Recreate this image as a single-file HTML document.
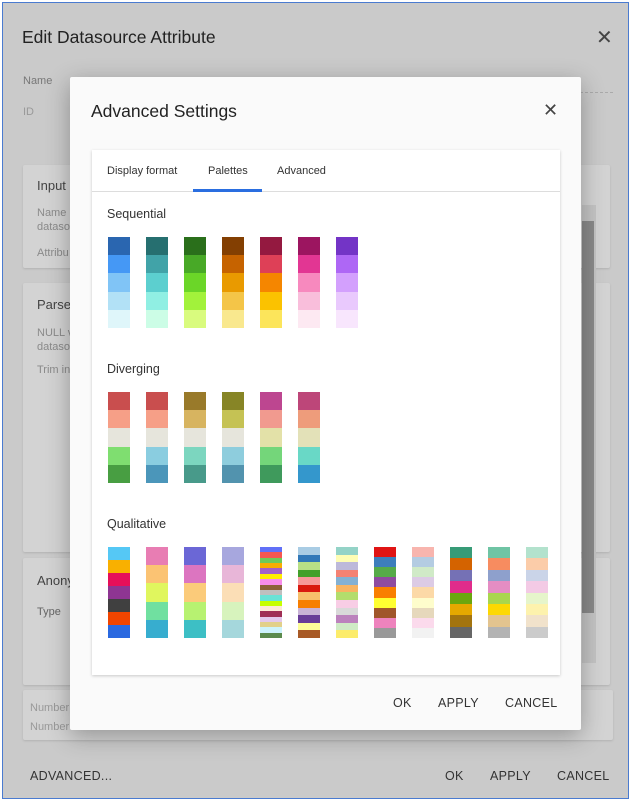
<!DOCTYPE html>
<html><head><style>
*{margin:0;padding:0;box-sizing:border-box}
body{width:633px;height:802px;background:#fff;font-family:"Liberation Sans",Arial,sans-serif;position:relative;overflow:hidden}
.frame{position:absolute;left:2px;top:2px;width:627px;height:797px;border:1px solid #4a7bd0;background:#cacaca}
.abs{position:absolute}
.card{position:absolute;background:#d3d3d3;border-radius:2px;box-shadow:0 1px 2px rgba(0,0,0,.12)}
.g{color:#8a8a8a;font-size:11px}
.modal{position:absolute;left:70px;top:77px;width:511px;height:653px;background:#fafafa;box-shadow:0 6px 24px rgba(0,0,0,.3);border-radius:2px}
.inner{position:absolute;left:22px;top:73px;width:468px;height:525px;background:#fff;box-shadow:0 1px 3px rgba(0,0,0,.2)}
.tab{position:absolute;top:15px;font-size:11px;color:#333}
.col{position:absolute;width:22px;display:flex;flex-direction:column}
.col div{flex:1}
.lbl{position:absolute;left:15px;font-size:12.5px;color:#333}
.btn{position:absolute;font-size:12.5px;color:#333;letter-spacing:.3px}
</style></head><body>
<div class="frame"></div>
<div class="abs" style="left:22px;top:27px;font-size:17.5px;color:#222">Edit Datasource Attribute</div>
<div class="abs" style="left:596px;top:25px;font-size:20px;color:#444">✕</div>
<div class="abs g" style="left:23px;top:75px;color:#777">Name</div>
<div class="abs g" style="left:23px;top:106px;color:#999">ID</div>
<div class="abs" style="left:405px;top:92px;width:208px;border-top:1px dashed #aaa"></div>
<div class="card" style="left:23px;top:165px;width:587px;height:103px"></div>
<div class="abs" style="left:37px;top:178px;font-size:13px;color:#444">Input</div>
<div class="abs g" style="left:37px;top:206px;line-height:14px">Name<br>dataso</div>
<div class="abs g" style="left:37px;top:247px">Attribu</div>
<div class="card" style="left:23px;top:283px;width:587px;height:269px"></div>
<div class="abs" style="left:37px;top:297px;font-size:13px;color:#444">Parse</div>
<div class="abs g" style="left:37px;top:326px;line-height:14px">NULL v<br>dataso</div>
<div class="abs g" style="left:37px;top:364px">Trim in</div>
<div class="card" style="left:23px;top:558px;width:587px;height:127px"></div>
<div class="abs" style="left:37px;top:573px;font-size:13px;color:#444">Anony</div>
<div class="abs g" style="left:37px;top:606px;color:#666">Type</div>
<div class="card" style="left:23px;top:690px;width:590px;height:50px"></div>
<div class="abs g" style="left:30px;top:699px;color:#999;line-height:19px">Number<br>Number</div>
<div class="abs" style="left:582px;top:205px;width:14px;height:458px;background:#c4c4c4"></div>
<div class="abs" style="left:582px;top:221px;width:12px;height:392px;background:#8a8a8a"></div>
<div class="btn" style="left:30px;top:769px">ADVANCED...</div>
<div class="btn" style="left:445px;top:769px">OK</div>
<div class="btn" style="left:490px;top:769px">APPLY</div>
<div class="btn" style="left:557px;top:769px">CANCEL</div>

<div class="modal">
<div class="abs" style="left:21px;top:24px;font-size:17.5px;color:#222">Advanced Settings</div>
<div class="abs" style="left:473px;top:23px;font-size:18px;color:#444">✕</div>
<div class="inner">
<div class="tab" style="left:15px">Display format</div>
<div class="tab" style="left:116px">Palettes</div>
<div class="tab" style="left:185px">Advanced</div>
<div class="abs" style="left:0;top:41px;width:468px;height:1px;background:#ddd"></div>
<div class="abs" style="left:101px;top:39px;width:69px;height:3px;background:#2a6ee0"></div>
<div class="lbl" style="top:57px">Sequential</div>
<div class="lbl" style="top:212px">Diverging</div>
<div class="lbl" style="top:367px">Qualitative</div>
<div id="p"></div>
</div>
<div class="btn" style="left:323px;top:619px">OK</div>
<div class="btn" style="left:368px;top:619px">APPLY</div>
<div class="btn" style="left:435px;top:619px">CANCEL</div>
</div>
<script>
var seq=[["2a66b0","4598f5","80c4f6","b2e1f6","dff6fa"],["266f70","41a3a8","5ccfcf","90efe3","ccfde6"],["2a6f1b","48a927","6bd628","a2f23b","d9fb7e"],["833f02","c66300","e99a00","f4c548","f9e88e"],["941940","de4057","f58600","fbc200","fce55b"],["9c1560","e23693","f789be","f9bedb","fde9f2"],["7334c6","ae67f5","d3a0fd","e9c9fd","f8e6fd"]];
var div=[["c94e4e","f69f87","e6e5dc","7fde70","489e42"],["c94e4e","f69f87","e6e5dc","8acde0","4b96ba"],["997a2a","d7b460","e6e5dc","7cd6bf","489a8a"],["878526","c5c254","e6e5dc","8ecddd","5293ae"],["bd4690","f19a8f","e3e1a8","74d67a","3f9a5c"],["bd4679","ee9c7b","e3e1b8","69d8c6","3497cc"]];
var q=[["55c8f5","f9b000","e60f59","8e3592","404040","f04500","2a69e0"],["e87db3","fbc373","e0f65e","70e0a0","37adcf"],["6b67d6","dc75c0","fbcb7a","b7f271","3dbfc5"],["a7a7de","e8b6d8","fbdeb6","d7f3bd","a5d7dc"],["6170f7","f55750","6fca58","f8ad02","a45fc8","ffec00","f78cea","8c6139","bfbfbf","6ae2d6","c6ff00","fde9d6","9f2e55","e3c9ec","e2d08a","cdf3fc","5b8b4d"],["a9cce4","3178b8","b8e086","42a02a","f6999a","d9190f","f7bf6b","f77f01","c9b3d6","683c98","fdfd99","a85a26"],["94d3c7","fefdb4","bdb9da","f48273","83b1d3","f7b462","b3dd6c","f8cde5","d9d9d9","bc82bd","cfebc5","fcec6b"],["e01414","3d7ebc","56ab49","8f4ba0","f97f00","ffff31","a0562a","ee83bd","999999"],["f8b5ae","b4cce2","d0eac7","dccbe5","fcd9a7","fefdcc","e6d8bc","fbdaec","f2f2f2"],["379b77","d46300","7571b5","e12c8b","6ba60e","e5a800","a3740f","666666"],["6fc4a4","f78c60","8ea0cc","e48dc3","a9d64d","fdd802","e3c48f","b3b3b3"],["b3e2cd","fbcca9","cad4e8","f3cae5","e6f5cb","fdf2ad","f1e2cb","cbcbcb"]];
var h="";
function put(arr,top,ht){arr.forEach(function(c,i){h+='<div class="col" style="left:'+(16+i*38)+'px;top:'+top+'px;height:'+ht+'px">'+c.map(function(x){return '<div style="background:#'+x+'"></div>'}).join("")+'</div>';});}
put(seq,87,91);put(div,242,91);put(q,397,91);
document.getElementById("p").innerHTML=h;
</script>
</body></html>
